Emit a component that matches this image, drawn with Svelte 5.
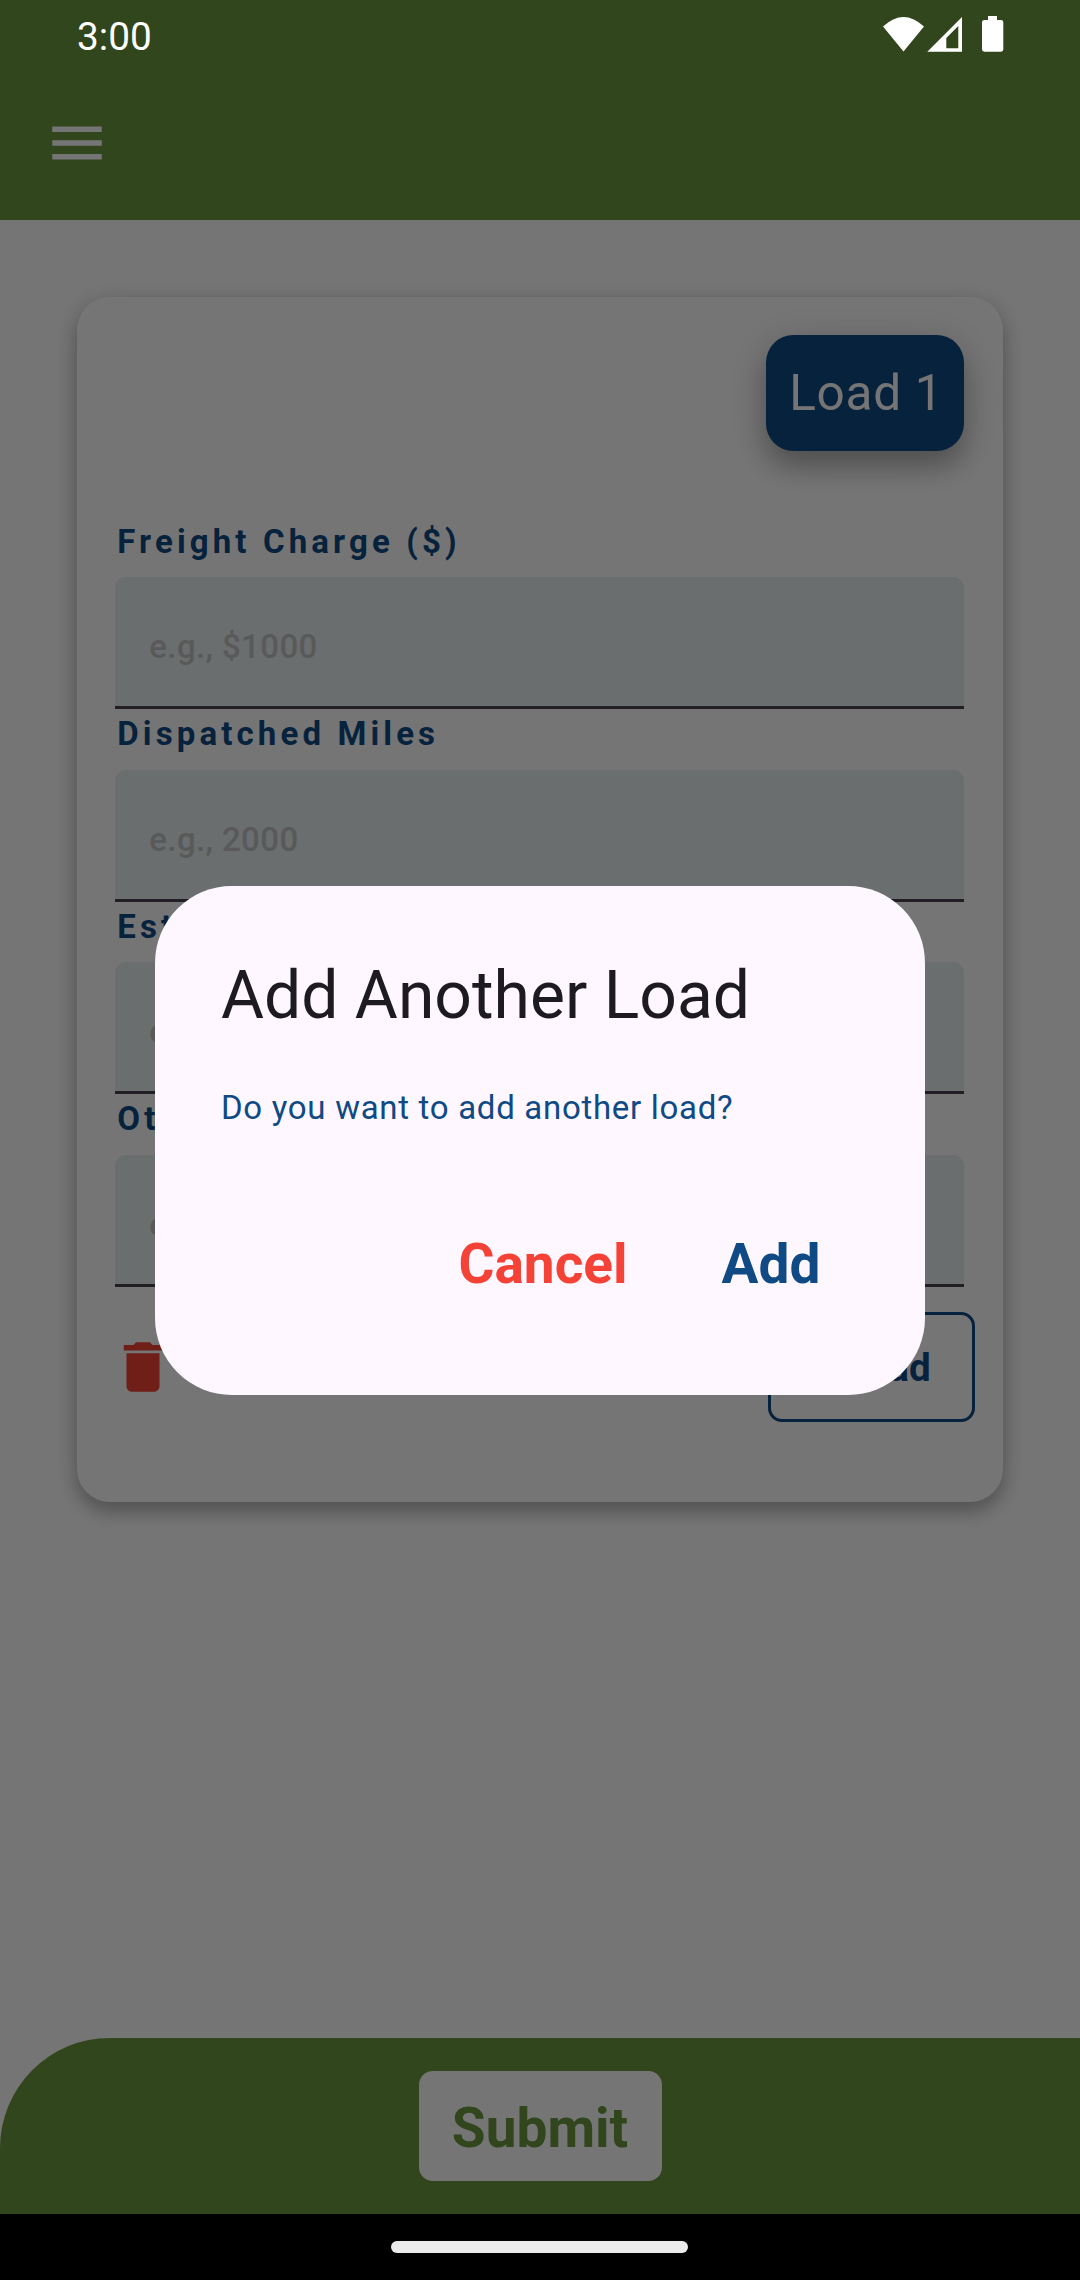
<script>
  const fields = [
    { label: 'Freight Charge ($)', hint: 'e.g., $1000' },
    { label: 'Dispatched Miles', hint: 'e.g., 2000' },
    { label: 'Est.', hint: 'e.g.' },
    { label: 'Oth.', hint: 'e.g.' }
  ];
</script>

<div class="screen">
  <header class="appbar">
    <svg class="menu" viewBox="0 0 24 24"><path d="M3 18h18v-2H3v2zm0-5h18v-2H3v2zm0-7v2h18V6H3z" /></svg>
  </header>

  <main class="content">
    <section class="card">
      <div class="chip">Load 1</div>
      {#each fields as field}
        <div class="field">
          <div class="label">{field.label}</div>
          <div class="input">{field.hint}</div>
        </div>
      {/each}
      <div class="actions">
        <svg class="trash" viewBox="0 0 24 24"><path d="M6 19c0 1.1.9 2 2 2h8c1.1 0 2-.9 2-2V7H6v12zM19 4h-3.5l-1-1h-5l-1 1H5v2h14V4z" /></svg>
        <div class="outlined">+ Load</div>
      </div>
    </section>
  </main>

  <footer class="bottom">
    <div class="submit">Submit</div>
  </footer>
  <div class="navbar"><div class="pill"></div></div>

  <div class="scrim">
    <div class="dialog">
      <h1>Add Another Load</h1>
      <p>Do you want to add another load?</p>
      <div class="buttons">
        <span class="cancel">Cancel</span>
        <span class="add">Add</span>
      </div>
    </div>
  </div>

  <div class="status">
    <span class="time">3:00</span>
    <svg class="sysicons" viewBox="0 0 120 36">
      <path d="M0 10.5Q20.500 -8.500 41 10.500L20.500 35.500z" />
      <path fill-rule="evenodd" d="M44.300 35.700L79 1V35.700zM63.300 32.300H75.300V10L63.300 22z" />
      <path d="M105 0h9v4h4q2.300 0 2.300 2.300v27q0 2.400-2.300 2.400h-16.500q-2.500 0-2.500-2.400v-27q0-2.300 2.500-2.300h3.500z" />
    </svg>
  </div>
</div>

<style>
  :global(body) {
    margin: 0;
  }
  .screen {
    position: relative;
    display: flex;
    flex-direction: column;
    width: 1080px;
    height: 2280px;
    overflow: hidden;
    background: #fff;
    font-family: Roboto, sans-serif;
    box-sizing: border-box;
  }
  .screen * {
    box-sizing: border-box;
  }
  .appbar {
    height: 220px;
    padding: 110px 43.5px 0;
    background: #6b983e;
  }
  .menu {
    display: block;
    width: 66px;
    height: 66px;
    fill: #fff;
  }
  .content {
    flex: 1;
    padding: 76.75px 77px 0;
  }
  .card {
    display: flex;
    flex-direction: column;
    height: 1205px;
    padding: 38.25px 38.75px 38.5px 38.25px;
    border-radius: 33px;
    background: #fff;
    box-shadow: 0 10px 18px rgba(0, 0, 0, 0.22), 0 4px 26px rgba(0, 0, 0, 0.14);
  }
  .chip {
    align-self: flex-end;
    width: 198px;
    height: 115.5px;
    margin-bottom: 66.25px;
    padding-left: 23px;
    border-radius: 27.5px;
    background: #104a84;
    color: #fff;
    font-size: 49.5px;
    line-height: 117px;
    letter-spacing: 0.7px;
    white-space: nowrap;
    box-shadow: 0 16px 26px rgba(0, 0, 0, 0.24), 0 7px 46px rgba(0, 0, 0, 0.14);
  }
  .field {
    height: 192.5px;
  }
  .label {
    height: 60.5px;
    padding-left: 2px;
    color: #104a84;
    font-size: 33px;
    font-weight: 700;
    line-height: 49px;
    letter-spacing: 4.125px;
  }
  .input {
    height: 132px;
    padding-left: 34px;
    border-bottom: 3px solid #49454f;
    border-radius: 11px 11px 0 0;
    background: #e6eff1;
    color: #c3c3c3;
    font-size: 33px;
    font-weight: 500;
    line-height: 139.6px;
    letter-spacing: 0.4px;
  }
  .actions {
    display: flex;
    justify-content: space-between;
    align-items: center;
    height: 110px;
    margin: 25px -10.5px 0 -5.5px;
  }
  .trash {
    width: 66px;
    height: 66px;
    fill: #f44336;
  }
  .outlined {
    width: 206.5px;
    height: 110px;
    padding-left: 44px;
    border: 3px solid #104a84;
    border-radius: 14px;
    color: #104a84;
    font-size: 38.5px;
    font-weight: 700;
    line-height: 106px;
  }
  .bottom {
    display: flex;
    justify-content: center;
    align-items: center;
    height: 176px;
    border-top-left-radius: 110px;
    background: #6b983e;
  }
  .submit {
    width: 243px;
    height: 110px;
    border-radius: 13.75px;
    background: #fff;
    color: #6b983e;
    font-size: 55px;
    font-weight: 700;
    line-height: 115px;
    text-align: center;
  }
  .navbar {
    position: relative;
    z-index: 2;
    display: flex;
    height: 66px;
    padding: 27px 0 0 391px;
    background: #000;
  }
  .pill {
    width: 297px;
    height: 12px;
    border-radius: 6px;
    background: #ebebeb;
  }
  .scrim {
    position: absolute;
    inset: 0;
    z-index: 1;
    display: flex;
    justify-content: center;
    align-items: center;
    background: rgba(0, 0, 0, 0.54);
  }
  .dialog {
    width: 770px;
    height: 509px;
    padding: 66px;
    border-radius: 77px;
    background: #fef7ff;
  }
  h1 {
    margin: 0;
    color: #1d1b20;
    font-size: 66px;
    font-weight: 400;
    line-height: 88px;
  }
  p {
    margin: 44px 0 0;
    color: #104a84;
    font-size: 33px;
    line-height: 47px;
    letter-spacing: 0.7px;
  }
  .buttons {
    display: flex;
    justify-content: flex-end;
    gap: 94px;
    margin-top: 78px;
    padding-right: 38.5px;
    font-size: 55px;
    font-weight: 700;
    line-height: 110px;
  }
  .cancel {
    color: #f44336;
  }
  .add {
    color: #104a84;
  }
  .status {
    position: absolute;
    inset: 0 0 auto 0;
    z-index: 3;
    display: flex;
    justify-content: space-between;
    height: 66px;
    padding: 16px 77px 0;
    color: #fff;
  }
  .time {
    font-size: 38.75px;
    line-height: 42px;
  }
  .sysicons {
    width: 120px;
    height: 36px;
    overflow: visible;
    fill: #fff;
  }
</style>
